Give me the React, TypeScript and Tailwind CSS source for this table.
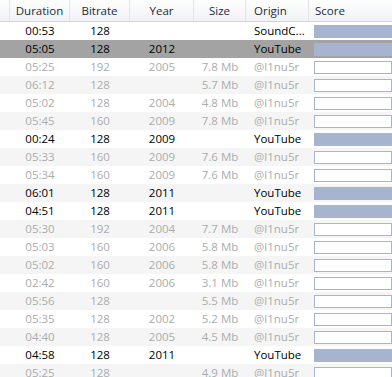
import React from "react";

type Row = {
    duration: string;
    bitrate: string;
    year: string;
    size: string;
    origin: string;
};

const rows: Row[] = [
    { duration: "00:53", bitrate: "128", year: "", size: "", origin: "SoundC..." },
    { duration: "05:05", bitrate: "128", year: "2012", size: "", origin: "YouTube" },
    { duration: "05:25", bitrate: "192", year: "2005", size: "7.8 Mb", origin: "@l1nu5r" },
    { duration: "06:12", bitrate: "128", year: "", size: "5.7 Mb", origin: "@l1nu5r" },
    { duration: "05:02", bitrate: "128", year: "2004", size: "4.8 Mb", origin: "@l1nu5r" },
    { duration: "05:45", bitrate: "160", year: "2009", size: "7.8 Mb", origin: "@l1nu5r" },
    { duration: "00:24", bitrate: "128", year: "2009", size: "", origin: "YouTube" },
    { duration: "05:33", bitrate: "160", year: "2009", size: "7.6 Mb", origin: "@l1nu5r" },
    { duration: "05:34", bitrate: "160", year: "2009", size: "7.6 Mb", origin: "@l1nu5r" },
    { duration: "06:01", bitrate: "128", year: "2011", size: "", origin: "YouTube" },
    { duration: "04:51", bitrate: "128", year: "2011", size: "", origin: "YouTube" },
    { duration: "05:30", bitrate: "192", year: "2004", size: "7.7 Mb", origin: "@l1nu5r" },
    { duration: "05:03", bitrate: "160", year: "2006", size: "5.8 Mb", origin: "@l1nu5r" },
    { duration: "05:02", bitrate: "160", year: "2006", size: "5.8 Mb", origin: "@l1nu5r" },
    { duration: "02:42", bitrate: "160", year: "2006", size: "3.1 Mb", origin: "@l1nu5r" },
    { duration: "05:56", bitrate: "128", year: "", size: "5.5 Mb", origin: "@l1nu5r" },
    { duration: "05:35", bitrate: "128", year: "2002", size: "5.2 Mb", origin: "@l1nu5r" },
    { duration: "04:40", bitrate: "128", year: "2005", size: "4.5 Mb", origin: "@l1nu5r" },
    { duration: "04:58", bitrate: "128", year: "2011", size: "", origin: "YouTube" },
    { duration: "05:25", bitrate: "128", year: "", size: "4.9 Mb", origin: "@l1nu5r" },
];

const SELECTED = 1;

const cols = "grid grid-cols-[10px_60px_60px_64px_52px_63px_1fr]";

const headCell = "border-r border-[#e3e4e6] flex items-center";

export default function App() {
    return (
        <div className="w-[392px] h-[377px] overflow-hidden bg-white text-[11.5px] font-['Open_Sans',sans-serif]">
            <div className={`${cols} h-[22px] border-b border-[#d5d5d5] bg-gradient-to-b from-white to-[#f1f2f5] text-[#1a2a3a]`}>
                <div className={headCell} />
                <div className={`${headCell} justify-center`}>Duration</div>
                <div className={`${headCell} justify-center`}>Bitrate</div>
                <div className={`${headCell} justify-center`}>Year</div>
                <div className={`${headCell} justify-center`}>Size</div>
                <div className={`${headCell} pl-[8px]`}>Origin</div>
                <div className="flex items-center pl-[6px]">Score</div>
            </div>

            {rows.map((r, i) => {
                const local = r.origin.startsWith("@");
                const bg =
                    i === SELECTED ? "bg-[#a3a3a3]" : i % 2 === 1 ? "bg-[#f5f5f5]" : "bg-white";
                const text = local ? "text-[#acacac]" : "text-black";
                return (
                    <div key={i} className={`${cols} h-[18px] items-center ${bg} ${text}`}>
                        <div />
                        <div className="text-center">{r.duration}</div>
                        <div className="text-center">{r.bitrate}</div>
                        <div className="text-center">{r.year}</div>
                        <div className="text-center">{r.size}</div>
                        <div className="pl-[8px] whitespace-nowrap overflow-hidden">{r.origin}</div>
                        <div className="pl-[5px]">
                            {local ? (
                                <div className="h-[13px] border border-[#a6b4d0] bg-white" />
                            ) : (
                                <div className="h-[13px] bg-[#a6b4d0]" />
                            )}
                        </div>
                    </div>
                );
            })}
        </div>
    );
}
